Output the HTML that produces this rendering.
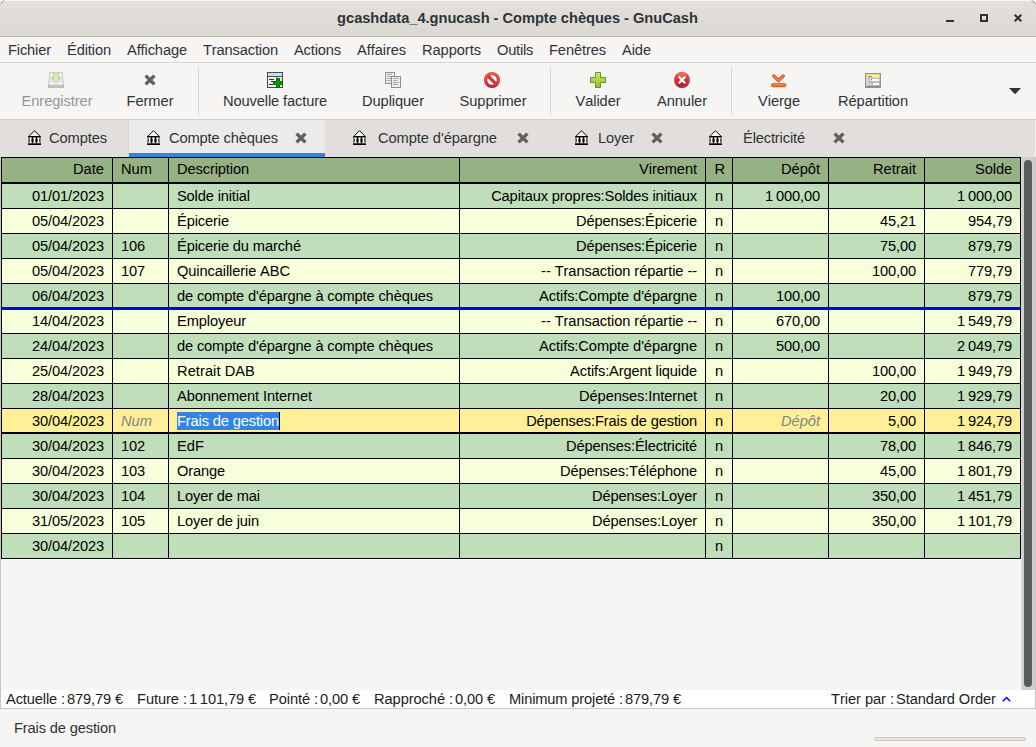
<!DOCTYPE html>
<html lang="fr">
<head>
<meta charset="utf-8">
<title>gcashdata_4.gnucash - Compte chèques - GnuCash</title>
<style>
html,body{margin:0;padding:0;}
html{background:#e9e8e6;}
body{width:1036px;height:747px;overflow:hidden;background:#f6f5f4;font-family:"Liberation Sans",sans-serif;font-size:14.67px;font-kerning:none;color:#2e3436;position:relative;}
.abs{position:absolute;white-space:nowrap;}
#titlebar{position:absolute;left:0;top:0;width:1036px;height:36px;background:linear-gradient(#e3e0dd,#dcd8d4);border-bottom:1px solid #b9b3ac;border-radius:5px 5px 0 0;box-shadow:inset 0 1px 0 #f8f7f6;}
#title{position:absolute;left:0;width:1035px;top:10px;text-align:center;font-weight:bold;font-size:14.67px;color:#2e3436;}
#menubar{position:absolute;left:0;top:37px;width:1036px;height:25px;background:#f6f5f4;border-bottom:1px solid #dcd8d5;}
#menubar>span{position:absolute;top:5px;}
#toolbar{position:absolute;left:0;top:63px;width:1036px;height:56px;background:#f6f5f4;border-bottom:1px solid #d5d0cc;}
.tb{position:absolute;top:30px;transform:translateX(-50%);white-space:nowrap;}
.tb.dis{color:#929595;}
.sep{position:absolute;top:4px;width:1px;height:48px;background:#d9d6d2;}
#tabbar{position:absolute;left:0;top:120px;width:1035px;height:37px;background:#e1dedb;}
#tabbar .lbl{position:absolute;top:10px;white-space:nowrap;}
#activetab{position:absolute;left:129px;top:0;width:196px;height:33px;background:#edebe9;border-bottom:4px solid #3584e4;box-shadow:-1px 0 0 #d8d4d0;}

#reg{position:absolute;left:1px;top:157px;width:1020px;height:402px;}
#reg .row{position:absolute;left:0;width:1020px;height:25px;line-height:27px;color:#000;}
#reg .hdr{background:#96b183;height:26px;line-height:24px;}
#reg .g{background:#bfdeb9;}
#reg .y{background:#f6ffda;}
#reg .act{background:#ffef98;}
#reg .c{position:absolute;top:0;white-space:nowrap;}
#reg .c1{right:917px;}
#reg .c2{left:120px;}
#reg .c3{left:176px;}
#reg .c4{right:324px;}
#reg .c5{left:705px;width:26px;text-align:center;}
#reg .c6{right:201px;}
#reg .c7{right:105px;}
#reg .c8{right:9px;}
#reg .hdr .c5{left:706px;}
#reg i{color:#838383;}
#reg .sel{font-weight:normal;background:#3584e4;color:#fff;display:inline-block;height:18px;line-height:18px;border-right:1px solid #000;}
#reg .vl{position:absolute;top:0;width:1px;height:402px;background:#000;}
#reg .hl{position:absolute;left:0;width:1020px;height:1px;background:#000;}
#reg .hl.blue{background:#0000ff;height:3px;}
#sbar{position:absolute;left:1021px;top:157px;width:14px;height:533px;background:#cfcfcf;box-shadow:inset 1px 0 0 #d9d9d9;}
#sbar div{position:absolute;left:3px;top:3px;width:8px;height:527px;border-radius:4px;background:#585e5e;}
#summary{color:#1a1d1e;position:absolute;left:1px;top:690px;width:1034px;height:18px;background:#fff;border-bottom:1px solid #cdc7c2;}
#summary>span{position:absolute;top:0;line-height:18px;white-space:nowrap;}
#status{position:absolute;left:14px;top:720px;}
#prog{position:absolute;left:874px;top:737px;width:150px;height:2px;border:1px solid #cdc7c2;border-radius:2px;background:#e8e6e3;}
</style>
</head>
<body>
<div id="titlebar"><svg class="abs" style="left:0;top:0" width="6" height="6" viewBox="0 0 6 6"><path d="M-0.500 4.800 L4.800 -0.500" stroke="#4a4a4a" stroke-width="1" stroke-dasharray="1.400 0.900" fill="none"/></svg><svg class="abs" style="left:1030px;top:0" width="6" height="6" viewBox="0 0 6 6"><path d="M1.200 -0.500 L6.500 4.800" stroke="#4a4a4a" stroke-width="1" stroke-dasharray="1.400 0.900" fill="none"/></svg><div id="title"><span class="t" style="letter-spacing:-0.036px">gcashdata_4.gnucash - Compte chèques - GnuCash</span></div><svg class="abs" style="left:946px;top:14px" width="8" height="8" viewBox="0 0 8 8"><rect x="0" y="6" width="8" height="2" fill="#2e3436"/></svg>
<svg class="abs" style="left:980px;top:14px" width="8" height="8" viewBox="0 0 8 8"><rect x="1" y="1" width="6" height="6" fill="none" stroke="#2e3436" stroke-width="2"/></svg>
<svg class="abs" style="left:1014px;top:14px" width="8" height="8" viewBox="0 0 8 8"><path d="M0.700 0.700 L7.300 7.300 M7.300 0.700 L0.700 7.300" stroke="#2e3436" stroke-width="2"/></svg>
</div>
<div id="menubar">
<span style="left:8px"><span class="t" style="letter-spacing:-0.144px">Fichier</span></span><span style="left:67px"><span class="t" style="letter-spacing:-0.121px">Édition</span></span><span style="left:127px"><span class="t" style="letter-spacing:-0.128px">Affichage</span></span><span style="left:203px"><span class="t" style="letter-spacing:-0.148px">Transaction</span></span><span style="left:294px"><span class="t" style="letter-spacing:-0.157px">Actions</span></span><span style="left:357px"><span class="t" style="letter-spacing:-0.090px">Affaires</span></span><span style="left:422px"><span class="t" style="letter-spacing:-0.064px">Rapports</span></span><span style="left:497px"><span class="t" style="letter-spacing:-0.248px">Outils</span></span><span style="left:549px"><span class="t" style="letter-spacing:-0.110px">Fenêtres</span></span><span style="left:622px"><span class="t" style="letter-spacing:-0.089px">Aide</span></span>
</div>
<div id="toolbar">
<svg class="abs" style="left:48px;top:9px" width="16" height="16" viewBox="0 0 16 16"><defs><linearGradient id="gs" x1="0" y1="0" x2="0" y2="1"><stop offset="0" stop-color="#dcdcdc"/><stop offset="1" stop-color="#ececec"/></linearGradient></defs><path d="M1.5 0.5 h13 l1 12 v3 h-15 v-3 z" fill="url(#gs)" stroke="#cfcfcf" stroke-width="1"/><rect x="0.5" y="12.5" width="15" height="3" fill="#c4c4c4" stroke="#bdbdbd"/><rect x="1" y="11.5" width="14" height="1" fill="#fff"/><rect x="2.500" y="1.500" width="2.500" height="4.500" fill="#fff" fill-opacity="0.600"/><rect x="11" y="1.500" width="2.500" height="4.500" fill="#fff" fill-opacity="0.600"/><path d="M5.5 0.5 h5 v5 h2.2 L8 10.8 L3.3 5.5 h2.2 z" fill="#dde9b9" stroke="#b3d490" stroke-width="1"/></svg>
<svg class="abs" style="left:144px;top:11px" width="12" height="12" viewBox="0 0 12 12"><path d="M1.600 1.600 L10.400 10.400 M10.400 1.600 L1.600 10.400" stroke="#606060" stroke-width="3.400"/></svg>
<svg class="abs" style="left:267px;top:9px" width="16" height="16" viewBox="0 0 16 16"><rect x="0.5" y="0.5" width="15" height="15" fill="#eeeeec" stroke="#4a4a4a"/><rect x="1" y="1" width="14" height="3" fill="#c3dff7"/><rect x="1" y="4" width="14" height="1" fill="#4a4a4a"/><rect x="9" y="5" width="1" height="10" fill="#777"/><rect x="2" y="7" width="5" height="1" fill="#333"/><rect x="4" y="9" width="3" height="1" fill="#333"/><rect x="2" y="12" width="4" height="1" fill="#333"/><path d="M9.5 6.5 h3 v3 h3 v3 h-3 v3 h-3 v-3 h-3 v-3 h3 z" fill="#009a00" stroke="#006e00" stroke-width="1"/></svg>
<svg class="abs" style="left:385px;top:9px" width="16" height="16" viewBox="0 0 16 16"><rect x="0.5" y="0.5" width="9" height="11" fill="#ececea" stroke="#8f918c"/><path d="M2 2.5h5M2 4.5h5M2 6.5h5M2 8.5h5" stroke="#aaa" stroke-width="1"/><rect x="6.5" y="4.5" width="9" height="11" fill="#ececea" stroke="#8f918c"/><path d="M8 6.5h6M8 8.5h4M8 10.500h6M8 12.500h5" stroke="#aaa" stroke-width="1"/></svg>
<svg class="abs" style="left:484px;top:9px" width="16" height="16" viewBox="0 0 16 16"><defs><linearGradient id="gr" x1="0" y1="0" x2="0" y2="1"><stop offset="0" stop-color="#ea4a3a"/><stop offset="0.600" stop-color="#cc2a30"/><stop offset="1" stop-color="#9c1040"/></linearGradient></defs><circle cx="8" cy="8" r="8" fill="url(#gr)"/><circle cx="8" cy="8" r="6.600" fill="none" stroke="#fff" stroke-opacity="0.220" stroke-width="1"/><circle cx="8" cy="8" r="4.800" fill="#fff"/><path d="M4 4 L12 12" stroke="#d23a38" stroke-width="3.200"/></svg>
<svg class="abs" style="left:590px;top:9px" width="16" height="16" viewBox="0 0 16 16"><defs><linearGradient id="gg" x1="0" y1="0" x2="0" y2="1"><stop offset="0" stop-color="#d2e66a"/><stop offset="1" stop-color="#9aba32"/></linearGradient></defs><path d="M5.5 0.5 h5 v5 h5 v5 h-5 v5 h-5 v-5 h-5 v-5 h5 z" fill="url(#gg)" stroke="#5a9a22" stroke-width="1"/></svg>
<svg class="abs" style="left:674px;top:9px" width="16" height="16" viewBox="0 0 16 16"><circle cx="8" cy="8" r="8" fill="url(#gr)"/><ellipse cx="8" cy="3.600" rx="4.500" ry="2.400" fill="#ffb080" fill-opacity="0.350"/><circle cx="8" cy="8" r="6.800" fill="none" stroke="#fff" stroke-opacity="0.150" stroke-width="1"/><path d="M4.800 4.800 L11.200 11.200 M11.200 4.800 L4.800 11.200" stroke="#fff" stroke-width="2.300"/></svg>
<svg class="abs" style="left:771px;top:9px" width="16" height="16" viewBox="0 0 16 16"><defs><linearGradient id="go" x1="0" y1="0" x2="0" y2="1"><stop offset="0" stop-color="#f4a070"/><stop offset="1" stop-color="#dc5418"/></linearGradient></defs><path d="M2.700 3.900 L7.500 8.500 L12.300 3.900" fill="none" stroke="#cc4a10" stroke-width="3.200" stroke-linecap="round" stroke-linejoin="round"/><path d="M2.700 3.900 L7.500 8.500 L12.300 3.900" fill="none" stroke="#f29a5e" stroke-width="1.300" stroke-linecap="round" stroke-linejoin="round"/><rect x="0.500" y="11.400" width="14.500" height="3.400" rx="1.700" fill="url(#go)" stroke="#cc4a10" stroke-width="0.800"/></svg>
<svg class="abs" style="left:865px;top:9px" width="16" height="16" viewBox="0 0 16 16"><rect x="0.500" y="1.500" width="15" height="14" fill="#d2d2d2" stroke="#949494"/><rect x="1" y="2" width="14" height="4" fill="#dede7c"/><rect x="2" y="3" width="12" height="2" fill="#f7f79c"/><rect x="3" y="4" width="4" height="1" fill="#8a8a50"/><rect x="4.500" y="6.200" width="9.800" height="3.200" fill="#fff" stroke="#9a9a9a" stroke-width="0.600"/><rect x="4.500" y="10.300" width="9.800" height="3.200" fill="#fff" stroke="#9a9a9a" stroke-width="0.600"/><rect x="6" y="7.300" width="1" height="1" fill="#555"/><rect x="6" y="11.400" width="2" height="1" fill="#666"/><rect x="1" y="14" width="14" height="1" fill="#8a8686"/></svg>
<svg class="abs" style="left:1009px;top:25px" width="12" height="7" viewBox="0 0 12 7"><path d="M0 0 H12 L6 6.200 Z" fill="#2e3436"/></svg>

<div class="tb dis" style="left:57px"><span class="t" style="letter-spacing:-0.066px">Enregistrer</span></div>
<div class="tb" style="left:150px"><span class="t" style="letter-spacing:-0.043px">Fermer</span></div>
<div class="sep" style="left:198px"></div>
<div class="tb" style="left:275px"><span class="t" style="letter-spacing:-0.124px">Nouvelle facture</span></div>
<div class="tb" style="left:393px"><span class="t" style="letter-spacing:-0.086px">Dupliquer</span></div>
<div class="tb" style="left:493px"><span class="t" style="letter-spacing:-0.073px">Supprimer</span></div>
<div class="sep" style="left:550px"></div>
<div class="tb" style="left:598px"><span class="t" style="letter-spacing:-0.093px">Valider</span></div>
<div class="tb" style="left:682px"><span class="t" style="letter-spacing:-0.079px">Annuler</span></div>
<div class="sep" style="left:731px"></div>
<div class="tb" style="left:779px"><span class="t" style="letter-spacing:-0.066px">Vierge</span></div>
<div class="tb" style="left:873px"><span class="t" style="letter-spacing:-0.084px">Répartition</span></div>
</div>
<div id="tabbar">
<div id="activetab"></div>
<svg class="abs" style="left:28px;top:10px" width="13" height="16" viewBox="0 0 13 16"><path d="M6.500 0.700 L12.300 6.500 L0.700 6.500 Z" fill="#fff" stroke="#000" stroke-width="1"/><rect x="0" y="6.300" width="13" height="1" fill="#000"/><rect x="0.600" y="7.200" width="11.800" height="6.200" fill="#000"/><rect x="1.70" y="7.700" width="1.700" height="5.400" fill="#fff"/><rect x="1.20" y="7.700" width="2.700" height="0.900" fill="#fff"/><rect x="1.20" y="12.300" width="2.700" height="0.900" fill="#fff"/><rect x="5.65" y="7.700" width="1.700" height="5.400" fill="#fff"/><rect x="5.15" y="7.700" width="2.700" height="0.900" fill="#fff"/><rect x="5.15" y="12.300" width="2.700" height="0.900" fill="#fff"/><rect x="9.60" y="7.700" width="1.700" height="5.400" fill="#fff"/><rect x="9.10" y="7.700" width="2.700" height="0.900" fill="#fff"/><rect x="9.10" y="12.300" width="2.700" height="0.900" fill="#fff"/><rect x="0" y="13.400" width="13" height="1.600" fill="#000"/></svg>
<svg class="abs" style="left:147px;top:10px" width="13" height="16" viewBox="0 0 13 16"><path d="M6.500 0.700 L12.300 6.500 L0.700 6.500 Z" fill="#fff" stroke="#000" stroke-width="1"/><rect x="0" y="6.300" width="13" height="1" fill="#000"/><rect x="0.600" y="7.200" width="11.800" height="6.200" fill="#000"/><rect x="1.70" y="7.700" width="1.700" height="5.400" fill="#fff"/><rect x="1.20" y="7.700" width="2.700" height="0.900" fill="#fff"/><rect x="1.20" y="12.300" width="2.700" height="0.900" fill="#fff"/><rect x="5.65" y="7.700" width="1.700" height="5.400" fill="#fff"/><rect x="5.15" y="7.700" width="2.700" height="0.900" fill="#fff"/><rect x="5.15" y="12.300" width="2.700" height="0.900" fill="#fff"/><rect x="9.60" y="7.700" width="1.700" height="5.400" fill="#fff"/><rect x="9.10" y="7.700" width="2.700" height="0.900" fill="#fff"/><rect x="9.10" y="12.300" width="2.700" height="0.900" fill="#fff"/><rect x="0" y="13.400" width="13" height="1.600" fill="#000"/></svg>
<svg class="abs" style="left:353px;top:10px" width="13" height="16" viewBox="0 0 13 16"><path d="M6.500 0.700 L12.300 6.500 L0.700 6.500 Z" fill="#fff" stroke="#000" stroke-width="1"/><rect x="0" y="6.300" width="13" height="1" fill="#000"/><rect x="0.600" y="7.200" width="11.800" height="6.200" fill="#000"/><rect x="1.70" y="7.700" width="1.700" height="5.400" fill="#fff"/><rect x="1.20" y="7.700" width="2.700" height="0.900" fill="#fff"/><rect x="1.20" y="12.300" width="2.700" height="0.900" fill="#fff"/><rect x="5.65" y="7.700" width="1.700" height="5.400" fill="#fff"/><rect x="5.15" y="7.700" width="2.700" height="0.900" fill="#fff"/><rect x="5.15" y="12.300" width="2.700" height="0.900" fill="#fff"/><rect x="9.60" y="7.700" width="1.700" height="5.400" fill="#fff"/><rect x="9.10" y="7.700" width="2.700" height="0.900" fill="#fff"/><rect x="9.10" y="12.300" width="2.700" height="0.900" fill="#fff"/><rect x="0" y="13.400" width="13" height="1.600" fill="#000"/></svg>
<svg class="abs" style="left:575px;top:10px" width="13" height="16" viewBox="0 0 13 16"><path d="M6.500 0.700 L12.300 6.500 L0.700 6.500 Z" fill="#fff" stroke="#000" stroke-width="1"/><rect x="0" y="6.300" width="13" height="1" fill="#000"/><rect x="0.600" y="7.200" width="11.800" height="6.200" fill="#000"/><rect x="1.70" y="7.700" width="1.700" height="5.400" fill="#fff"/><rect x="1.20" y="7.700" width="2.700" height="0.900" fill="#fff"/><rect x="1.20" y="12.300" width="2.700" height="0.900" fill="#fff"/><rect x="5.65" y="7.700" width="1.700" height="5.400" fill="#fff"/><rect x="5.15" y="7.700" width="2.700" height="0.900" fill="#fff"/><rect x="5.15" y="12.300" width="2.700" height="0.900" fill="#fff"/><rect x="9.60" y="7.700" width="1.700" height="5.400" fill="#fff"/><rect x="9.10" y="7.700" width="2.700" height="0.900" fill="#fff"/><rect x="9.10" y="12.300" width="2.700" height="0.900" fill="#fff"/><rect x="0" y="13.400" width="13" height="1.600" fill="#000"/></svg>
<svg class="abs" style="left:709px;top:10px" width="13" height="16" viewBox="0 0 13 16"><path d="M6.500 0.700 L12.300 6.500 L0.700 6.500 Z" fill="#fff" stroke="#000" stroke-width="1"/><rect x="0" y="6.300" width="13" height="1" fill="#000"/><rect x="0.600" y="7.200" width="11.800" height="6.200" fill="#000"/><rect x="1.70" y="7.700" width="1.700" height="5.400" fill="#fff"/><rect x="1.20" y="7.700" width="2.700" height="0.900" fill="#fff"/><rect x="1.20" y="12.300" width="2.700" height="0.900" fill="#fff"/><rect x="5.65" y="7.700" width="1.700" height="5.400" fill="#fff"/><rect x="5.15" y="7.700" width="2.700" height="0.900" fill="#fff"/><rect x="5.15" y="12.300" width="2.700" height="0.900" fill="#fff"/><rect x="9.60" y="7.700" width="1.700" height="5.400" fill="#fff"/><rect x="9.10" y="7.700" width="2.700" height="0.900" fill="#fff"/><rect x="9.10" y="12.300" width="2.700" height="0.900" fill="#fff"/><rect x="0" y="13.400" width="13" height="1.600" fill="#000"/></svg>
<svg class="abs" style="left:295px;top:12px" width="12" height="12" viewBox="0 0 12 12"><path d="M1.600 1.600 L10.400 10.400 M10.400 1.600 L1.600 10.400" stroke="#606060" stroke-width="3.400"/></svg>
<svg class="abs" style="left:517px;top:12px" width="12" height="12" viewBox="0 0 12 12"><path d="M1.600 1.600 L10.400 10.400 M10.400 1.600 L1.600 10.400" stroke="#606060" stroke-width="3.400"/></svg>
<svg class="abs" style="left:651px;top:12px" width="12" height="12" viewBox="0 0 12 12"><path d="M1.600 1.600 L10.400 10.400 M10.400 1.600 L1.600 10.400" stroke="#606060" stroke-width="3.400"/></svg>
<svg class="abs" style="left:833px;top:12px" width="12" height="12" viewBox="0 0 12 12"><path d="M1.600 1.600 L10.400 10.400 M10.400 1.600 L1.600 10.400" stroke="#606060" stroke-width="3.400"/></svg>

<span class="lbl" style="left:49px"><span class="t" style="letter-spacing:-0.098px">Comptes</span></span>
<span class="lbl" style="left:169px"><span class="t" style="letter-spacing:-0.134px">Compte chèques</span></span>
<span class="lbl" style="left:378px"><span class="t" style="letter-spacing:-0.076px">Compte d'épargne</span></span>
<span class="lbl" style="left:598px"><span class="t" style="letter-spacing:-0.138px">Loyer</span></span>
<span class="lbl" style="left:743px"><span class="t" style="letter-spacing:-0.143px">Électricité</span></span>
</div>
<div id="reg">
<div class="row hdr" style="top:0"><span class="c c1"><span class="t" style="letter-spacing:0.005px">Date</span></span><span class="c c2"><span class="t" style="letter-spacing:0.011px">Num</span></span><span class="c c3"><span class="t" style="letter-spacing:-0.124px">Description</span></span><span class="c c4"><span class="t" style="letter-spacing:-0.086px">Virement</span></span><span class="c c5"><span class="t" style="letter-spacing:0.408px">R</span></span><span class="c c6"><span class="t" style="letter-spacing:-0.027px">Dépôt</span></span><span class="c c7"><span class="t" style="letter-spacing:-0.028px">Retrait</span></span><span class="c c8"><span class="t" style="letter-spacing:-0.102px">Solde</span></span></div>
<div class="row g" style="top:26px"><span class="c c1"><span class="t" style="letter-spacing:-0.141px">01/01/2023</span></span><span class="c c2"></span><span class="c c3"><span class="t" style="letter-spacing:-0.155px">Solde initial</span></span><span class="c c4"><span class="t" style="letter-spacing:-0.136px">Capitaux propres:Soldes initiaux</span></span><span class="c c5"><span class="t" style="letter-spacing:-0.157px">n</span></span><span class="c c6"><span class="t" style="letter-spacing:-0.119px">1 000,00</span></span><span class="c c7"></span><span class="c c8"><span class="t" style="letter-spacing:-0.119px">1 000,00</span></span></div>
<div class="row y" style="top:51px"><span class="c c1"><span class="t" style="letter-spacing:-0.141px">05/04/2023</span></span><span class="c c2"></span><span class="c c3"><span class="t" style="letter-spacing:-0.123px">Épicerie</span></span><span class="c c4"><span class="t" style="letter-spacing:-0.124px">Dépenses:Épicerie</span></span><span class="c c5"><span class="t" style="letter-spacing:-0.157px">n</span></span><span class="c c6"></span><span class="c c7"><span class="t" style="letter-spacing:-0.141px">45,21</span></span><span class="c c8"><span class="t" style="letter-spacing:-0.143px">954,79</span></span></div>
<div class="row g" style="top:76px"><span class="c c1"><span class="t" style="letter-spacing:-0.141px">05/04/2023</span></span><span class="c c2"><span class="t" style="letter-spacing:-0.157px">106</span></span><span class="c c3"><span class="t" style="letter-spacing:-0.131px">Épicerie du marché</span></span><span class="c c4"><span class="t" style="letter-spacing:-0.124px">Dépenses:Épicerie</span></span><span class="c c5"><span class="t" style="letter-spacing:-0.157px">n</span></span><span class="c c6"></span><span class="c c7"><span class="t" style="letter-spacing:-0.141px">75,00</span></span><span class="c c8"><span class="t" style="letter-spacing:-0.143px">879,79</span></span></div>
<div class="row y" style="top:101px"><span class="c c1"><span class="t" style="letter-spacing:-0.141px">05/04/2023</span></span><span class="c c2"><span class="t" style="letter-spacing:-0.157px">107</span></span><span class="c c3"><span class="t" style="letter-spacing:-0.114px">Quincaillerie ABC</span></span><span class="c c4"><span class="t" style="letter-spacing:-0.081px">-- Transaction répartie --</span></span><span class="c c5"><span class="t" style="letter-spacing:-0.157px">n</span></span><span class="c c6"></span><span class="c c7"><span class="t" style="letter-spacing:-0.143px">100,00</span></span><span class="c c8"><span class="t" style="letter-spacing:-0.143px">779,79</span></span></div>
<div class="row g" style="top:126px"><span class="c c1"><span class="t" style="letter-spacing:-0.141px">06/04/2023</span></span><span class="c c2"></span><span class="c c3"><span class="t" style="letter-spacing:-0.146px">de compte d'épargne à compte chèques</span></span><span class="c c4"><span class="t" style="letter-spacing:-0.093px">Actifs:Compte d'épargne</span></span><span class="c c5"><span class="t" style="letter-spacing:-0.157px">n</span></span><span class="c c6"><span class="t" style="letter-spacing:-0.143px">100,00</span></span><span class="c c7"></span><span class="c c8"><span class="t" style="letter-spacing:-0.143px">879,79</span></span></div>
<div class="row y" style="top:151px"><span class="c c1"><span class="t" style="letter-spacing:-0.141px">14/04/2023</span></span><span class="c c2"></span><span class="c c3"><span class="t" style="letter-spacing:-0.123px">Employeur</span></span><span class="c c4"><span class="t" style="letter-spacing:-0.081px">-- Transaction répartie --</span></span><span class="c c5"><span class="t" style="letter-spacing:-0.157px">n</span></span><span class="c c6"><span class="t" style="letter-spacing:-0.143px">670,00</span></span><span class="c c7"></span><span class="c c8"><span class="t" style="letter-spacing:-0.119px">1 549,79</span></span></div>
<div class="row g" style="top:176px"><span class="c c1"><span class="t" style="letter-spacing:-0.141px">24/04/2023</span></span><span class="c c2"></span><span class="c c3"><span class="t" style="letter-spacing:-0.146px">de compte d'épargne à compte chèques</span></span><span class="c c4"><span class="t" style="letter-spacing:-0.093px">Actifs:Compte d'épargne</span></span><span class="c c5"><span class="t" style="letter-spacing:-0.157px">n</span></span><span class="c c6"><span class="t" style="letter-spacing:-0.143px">500,00</span></span><span class="c c7"></span><span class="c c8"><span class="t" style="letter-spacing:-0.119px">2 049,79</span></span></div>
<div class="row y" style="top:201px"><span class="c c1"><span class="t" style="letter-spacing:-0.141px">25/04/2023</span></span><span class="c c2"></span><span class="c c3"><span class="t" style="letter-spacing:0.052px">Retrait DAB</span></span><span class="c c4"><span class="t" style="letter-spacing:-0.125px">Actifs:Argent liquide</span></span><span class="c c5"><span class="t" style="letter-spacing:-0.157px">n</span></span><span class="c c6"></span><span class="c c7"><span class="t" style="letter-spacing:-0.143px">100,00</span></span><span class="c c8"><span class="t" style="letter-spacing:-0.119px">1 949,79</span></span></div>
<div class="row g" style="top:226px"><span class="c c1"><span class="t" style="letter-spacing:-0.141px">28/04/2023</span></span><span class="c c2"></span><span class="c c3"><span class="t" style="letter-spacing:-0.104px">Abonnement Internet</span></span><span class="c c4"><span class="t" style="letter-spacing:-0.109px">Dépenses:Internet</span></span><span class="c c5"><span class="t" style="letter-spacing:-0.157px">n</span></span><span class="c c6"></span><span class="c c7"><span class="t" style="letter-spacing:-0.141px">20,00</span></span><span class="c c8"><span class="t" style="letter-spacing:-0.119px">1 929,79</span></span></div>
<div class="row act" style="top:251px"><span class="c c1"><span class="t" style="letter-spacing:-0.141px">30/04/2023</span></span><span class="c c2"><i><span class="t" style="letter-spacing:0.011px">Num</span></i></span><span class="c c3"><b class="sel"><span class="t" style="letter-spacing:-0.147px">Frais de gestion</span></b></span><span class="c c4"><span class="t" style="letter-spacing:-0.139px">Dépenses:Frais de gestion</span></span><span class="c c5"><span class="t" style="letter-spacing:-0.157px">n</span></span><span class="c c6"><i><span class="t" style="letter-spacing:-0.027px">Dépôt</span></i></span><span class="c c7"><span class="t" style="letter-spacing:-0.136px">5,00</span></span><span class="c c8"><span class="t" style="letter-spacing:-0.119px">1 924,79</span></span></div>
<div class="row g" style="top:276px"><span class="c c1"><span class="t" style="letter-spacing:-0.141px">30/04/2023</span></span><span class="c c2"><span class="t" style="letter-spacing:-0.157px">102</span></span><span class="c c3"><span class="t" style="letter-spacing:0.034px">EdF</span></span><span class="c c4"><span class="t" style="letter-spacing:-0.135px">Dépenses:Électricité</span></span><span class="c c5"><span class="t" style="letter-spacing:-0.157px">n</span></span><span class="c c6"></span><span class="c c7"><span class="t" style="letter-spacing:-0.141px">78,00</span></span><span class="c c8"><span class="t" style="letter-spacing:-0.119px">1 846,79</span></span></div>
<div class="row y" style="top:301px"><span class="c c1"><span class="t" style="letter-spacing:-0.141px">30/04/2023</span></span><span class="c c2"><span class="t" style="letter-spacing:-0.157px">103</span></span><span class="c c3"><span class="t" style="letter-spacing:-0.153px">Orange</span></span><span class="c c4"><span class="t" style="letter-spacing:-0.135px">Dépenses:Téléphone</span></span><span class="c c5"><span class="t" style="letter-spacing:-0.157px">n</span></span><span class="c c6"></span><span class="c c7"><span class="t" style="letter-spacing:-0.141px">45,00</span></span><span class="c c8"><span class="t" style="letter-spacing:-0.119px">1 801,79</span></span></div>
<div class="row g" style="top:326px"><span class="c c1"><span class="t" style="letter-spacing:-0.141px">30/04/2023</span></span><span class="c c2"><span class="t" style="letter-spacing:-0.157px">104</span></span><span class="c c3"><span class="t" style="letter-spacing:-0.149px">Loyer de mai</span></span><span class="c c4"><span class="t" style="letter-spacing:-0.129px">Dépenses:Loyer</span></span><span class="c c5"><span class="t" style="letter-spacing:-0.157px">n</span></span><span class="c c6"></span><span class="c c7"><span class="t" style="letter-spacing:-0.143px">350,00</span></span><span class="c c8"><span class="t" style="letter-spacing:-0.119px">1 451,79</span></span></div>
<div class="row y" style="top:351px"><span class="c c1"><span class="t" style="letter-spacing:-0.141px">31/05/2023</span></span><span class="c c2"><span class="t" style="letter-spacing:-0.157px">105</span></span><span class="c c3"><span class="t" style="letter-spacing:-0.153px">Loyer de juin</span></span><span class="c c4"><span class="t" style="letter-spacing:-0.129px">Dépenses:Loyer</span></span><span class="c c5"><span class="t" style="letter-spacing:-0.157px">n</span></span><span class="c c6"></span><span class="c c7"><span class="t" style="letter-spacing:-0.143px">350,00</span></span><span class="c c8"><span class="t" style="letter-spacing:-0.119px">1 101,79</span></span></div>
<div class="row g" style="top:376px"><span class="c c1"><span class="t" style="letter-spacing:-0.141px">30/04/2023</span></span><span class="c c2"></span><span class="c c3"></span><span class="c c4"></span><span class="c c5"><span class="t" style="letter-spacing:-0.157px">n</span></span><span class="c c6"></span><span class="c c7"></span><span class="c c8"></span></div>
<div class="vl" style="left:0"></div>
<div class="vl" style="left:111px"></div>
<div class="vl" style="left:167px"></div>
<div class="vl" style="left:458px"></div>
<div class="vl" style="left:704px"></div>
<div class="vl" style="left:731px"></div>
<div class="vl" style="left:827px"></div>
<div class="vl" style="left:923px"></div>
<div class="vl" style="left:1019px"></div>
<div class="hl" style="top:0"></div><div class="hl" style="top:25px;height:2px"></div>
<div class="hl" style="top:51px"></div>
<div class="hl" style="top:76px"></div>
<div class="hl" style="top:101px"></div>
<div class="hl" style="top:126px"></div>
<div class="hl blue" style="top:150px"></div>
<div class="hl" style="top:176px"></div>
<div class="hl" style="top:201px"></div>
<div class="hl" style="top:226px"></div>
<div class="hl" style="top:251px"></div>
<div class="hl" style="top:275px;height:2px"></div>
<div class="hl" style="top:301px"></div>
<div class="hl" style="top:326px"></div>
<div class="hl" style="top:351px"></div>
<div class="hl" style="top:376px"></div>
<div class="hl" style="top:401px"></div>
</div>
<div class="abs" style="left:0;top:157px;width:1px;height:552px;background:#c9c5c1"></div><div class="abs" style="left:1035px;top:157px;width:1px;height:552px;background:#c9c5c1"></div><div class="abs" style="left:1px;top:559px;width:1020px;height:1px;background:#fff"></div>
<div id="sbar"><div></div></div>
<div id="summary"><span style="left:5px"><span class="t" style="letter-spacing:-0.133px">Actuelle :</span></span><span style="left:66px"><span class="t" style="letter-spacing:-0.136px">879,79 €</span></span><span style="left:136px"><span class="t" style="letter-spacing:-0.067px">Future :</span></span><span style="left:188px"><span class="t" style="letter-spacing:-0.118px">1 101,79 €</span></span><span style="left:268px"><span class="t" style="letter-spacing:-0.092px">Pointé :</span></span><span style="left:319px"><span class="t" style="letter-spacing:-0.130px">0,00 €</span></span><span style="left:373px"><span class="t" style="letter-spacing:-0.082px">Rapproché :</span></span><span style="left:454px"><span class="t" style="letter-spacing:-0.130px">0,00 €</span></span><span style="left:508px"><span class="t" style="letter-spacing:-0.150px">Minimum projeté :</span></span><span style="left:624px"><span class="t" style="letter-spacing:-0.136px">879,79 €</span></span><span style="left:830px"><span class="t" style="letter-spacing:-0.051px">Trier par :</span></span><span style="left:895px"><span class="t" style="letter-spacing:-0.078px">Standard Order</span></span><svg class="abs" style="left:1001px;top:6px" width="9" height="6" viewBox="0 0 9 6"><path d="M0.800 5.200 L4.500 1.500 L8.200 5.200" fill="none" stroke="#0000ff" stroke-width="1.500"/></svg></div>
<div id="status"><span class="t" style="letter-spacing:-0.147px">Frais de gestion</span></div>
<div id="prog"></div>
</body>
</html>
